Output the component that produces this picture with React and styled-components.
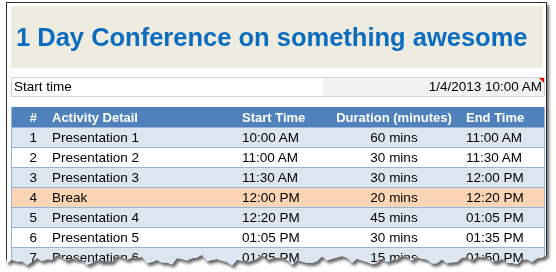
import React from 'react'
import styled, { createGlobalStyle } from 'styled-components'

const GlobalStyle = createGlobalStyle`
  body {
    margin: 0;
    background: #fff;
    font-family: "Liberation Sans", Arial, sans-serif;
    color: #000;
  }
`

const rows = [
  { n: 1, activity: 'Presentation 1', start: '10:00 AM', dur: '60 mins', end: '11:00 AM' },
  { n: 2, activity: 'Presentation 2', start: '11:00 AM', dur: '30 mins', end: '11:30 AM' },
  { n: 3, activity: 'Presentation 3', start: '11:30 AM', dur: '30 mins', end: '12:00 PM' },
  { n: 4, activity: 'Break', start: '12:00 PM', dur: '20 mins', end: '12:20 PM', brk: true },
  { n: 5, activity: 'Presentation 4', start: '12:20 PM', dur: '45 mins', end: '01:05 PM' },
  { n: 6, activity: 'Presentation 5', start: '01:05 PM', dur: '30 mins', end: '01:35 PM' },
  { n: 7, activity: 'Presentation 6', start: '01:35 PM', dur: '15 mins', end: '01:50 PM' },
]

// torn paper edge along the bottom of the frame
const FW = 541
function tornEdge() {
  const pts = [`0 0`, `${FW}px 0`]
  for (let x = FW; x >= 0; x -= 5) {
    const y = 258 + 2.5 * Math.sin(x * 0.09) + 2 * Math.sin(x * 0.31 + 1.3) + 1.5 * Math.sin(x * 0.73)
    pts.push(`${x}px ${y.toFixed(1)}px`)
  }
  pts.push(`0 256px`)
  return `polygon(${pts.join(', ')})`
}

function App() {
  return (
    <>
      <GlobalStyle />
      <Shell>
        <Frame>
          <TitleBand>1 Day Conference on something awesome</TitleBand>

          <StartRow>
            <StartLabel>Start time</StartLabel>
            <StartValue>
              1/4/2013 10:00 AM
              <Comment />
            </StartValue>
          </StartRow>

          <Table>
            <HeadRow>
              <NumCell>#</NumCell>
              <TextCell>Activity Detail</TextCell>
              <TextCell>Start Time</TextCell>
              <MidCell>Duration (minutes)</MidCell>
              <EndCell>End Time</EndCell>
            </HeadRow>
            {rows.map((r, i) => (
              <Row key={r.n} $bg={r.brk ? '#fcd5b4' : i % 2 === 0 ? '#dce6f1' : '#fff'}>
                <NumCell>{r.n}</NumCell>
                <TextCell>{r.activity}</TextCell>
                <TextCell>{r.start}</TextCell>
                <MidCell>{r.dur}</MidCell>
                <EndCell>{r.end}</EndCell>
              </Row>
            ))}
          </Table>
        </Frame>
      </Shell>
    </>
  )
}

const Shell = styled.div`
  padding: 2px 0 0 6px;
  width: fit-content;
  filter: drop-shadow(2px 3px 1.5px rgba(0, 0, 0, 0.6));
`
const Frame = styled.div`
  width: ${FW}px;
  height: 268px;
  box-sizing: border-box;
  border: 1px solid #2b2b2b;
  border-bottom: none;
  background: #fff;
  padding: 3px 1px 0 4px;
  display: flex;
  flex-direction: column;
  clip-path: ${tornEdge()};
  overflow: hidden;
`
const TitleBand = styled.div`
  height: 62px;
  margin-right: 2px;
  background: #eeece1;
  display: flex;
  align-items: center;
  padding-left: 5px;
  font-size: 25.5px;
  font-weight: bold;
  color: #0b6cc0;
  white-space: nowrap;
`
const StartRow = styled.div`
  margin-top: 9px;
  height: 20px;
  box-sizing: border-box;
  border: 1px solid #d4d4d4;
  display: flex;
  font-size: 13.5px;
  line-height: 18px;
`
const StartLabel = styled.div`
  flex: 0 0 311px;
  padding-left: 2px;
  box-sizing: border-box;
`
const StartValue = styled.div`
  flex: 1;
  position: relative;
  background: #f2f2f2;
  text-align: right;
  padding-right: 2px;
`
const Comment = styled.span`
  position: absolute;
  top: 0;
  right: 0;
  width: 0;
  height: 0;
  border-top: 5px solid #ff0000;
  border-left: 5px solid transparent;
`
const Table = styled.div`
  margin-top: 10px;
  border-left: 1px solid #95b3d7;
  border-right: 1px solid #95b3d7;
`
const HeadRow = styled.div`
  display: grid;
  grid-template-columns: 35px 190px 93px 128px 1fr;
  height: 20px;
  align-items: center;
  background: #4f81bd;
  color: #fff;
  font-weight: bold;
  font-size: 13px;
`
const Row = styled.div`
  display: grid;
  grid-template-columns: 35px 190px 93px 128px 1fr;
  height: 20px;
  box-sizing: border-box;
  border-top: 1px solid #95b3d7;
  align-items: center;
  background: ${p => p.$bg};
  font-size: 13.5px;
`
const NumCell = styled.div`
  text-align: right;
  padding-right: 10px;
`
const TextCell = styled.div`
  padding-left: 5px;
  white-space: nowrap;
`
const MidCell = styled.div`
  text-align: center;
  white-space: nowrap;
`
const EndCell = styled.div`
  padding-left: 8px;
  white-space: nowrap;
`

export default App
